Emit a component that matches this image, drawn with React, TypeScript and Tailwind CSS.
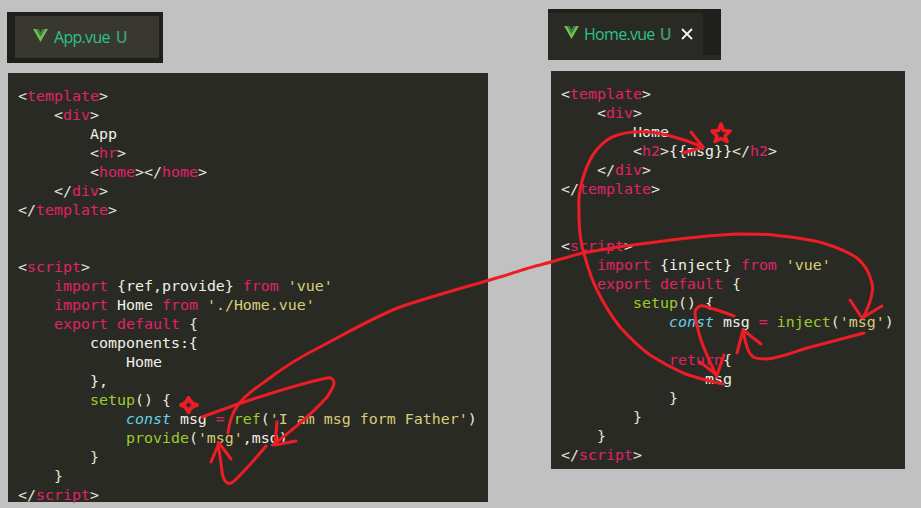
const pink = 'text-[#e0226a]';
const plain = 'text-[#f0f0e8]';
const green = 'text-[#9ccc2c]';
const str = 'text-[#d8ce78]';
const cyan = 'text-[#62d2ea] italic';
const punct = 'text-[#e6e6d8]';

type Tok = [string, string];

const tag = (name: string, close = false): Tok[] => [
  [close ? '</' : '<', punct],
  [name, pink],
  ['>', punct],
];

const leftLines: Tok[][] = [
  tag('template'),
  [['    ', plain], ...tag('div')],
  [['        App', plain]],
  [['        ', plain], ...tag('hr')],
  [['        ', plain], ...tag('home'), ...tag('home', true)],
  [['    ', plain], ...tag('div', true)],
  tag('template', true),
  [],
  [],
  tag('script'),
  [['    ', plain], ['import', pink], [' {ref,provide} ', plain], ['from', pink], [" 'vue'", str]],
  [['    ', plain], ['import', pink], [' Home ', plain], ['from', pink], [" './Home.vue'", str]],
  [['    ', plain], ['export default', pink], [' {', punct]],
  [['        components:{', plain]],
  [['            Home', plain]],
  [['        },', plain]],
  [['        ', plain], ['setup', green], ['() {', punct]],
  [['            ', plain], ['const', cyan], [' msg ', plain], ['=', pink], [' ', plain], ['ref', green], ['(', punct], ["'I am msg form Father'", str], [')', punct]],
  [['            ', plain], ['provide', green], ['(', punct], ["'msg'", str], [',msg)', plain]],
  [['        }', punct]],
  [['    }', punct]],
  tag('script', true),
];

const rightLines: Tok[][] = [
  tag('template'),
  [['    ', plain], ...tag('div')],
  [['        Home', plain]],
  [['        ', plain], ...tag('h2'), ['{{msg}}', plain], ...tag('h2', true)],
  [['    ', plain], ...tag('div', true)],
  tag('template', true),
  [],
  [],
  tag('script'),
  [['    ', plain], ['import', pink], [' {inject} ', plain], ['from', pink], [" 'vue'", str]],
  [['    ', plain], ['export default', pink], [' {', punct]],
  [['        ', plain], ['setup', green], ['() {', punct]],
  [['            ', plain], ['const', cyan], [' msg ', plain], ['=', pink], [' ', plain], ['inject', green], ['(', punct], ["'msg'", str], [')', punct]],
  [],
  [['            ', plain], ['return', pink], ['{', punct]],
  [['                msg', plain]],
  [['            }', punct]],
  [['        }', punct]],
  [['    }', punct]],
  tag('script', true),
];

function Code({ lines }: { lines: Tok[][] }) {
  return (
    <pre className="font-['DejaVu_Sans_Mono',monospace] text-[14.95px] leading-[19px]">
      {lines.map((line, i) => (
        <div key={i} className="h-[19px]">
          {line.map(([text, color], j) => (
            <span key={j} className={color}>
              {text}
            </span>
          ))}
        </div>
      ))}
    </pre>
  );
}

function VueIcon() {
  return (
    <svg width="15" height="13" viewBox="0 0 16 14" className="shrink-0 -translate-y-[2px]">
      <path d="M0 0h3.4L8 8l4.6-8H16L8 14z" fill="#6cc04a" />
      <path d="M3.4 0h2.6L8 3.5 10 0h2.6L8 8z" fill="#3f7d4a" />
    </svg>
  );
}

function Ink() {
  return (
    <svg
      width="921"
      height="508"
      viewBox="0 0 921 508"
      fill="none"
      stroke="#ee1c25"
      strokeWidth="3"
      strokeLinecap="round"
      strokeLinejoin="round"
      className="absolute left-0 top-0"
    >
      {/* long arrow from the left panel to inject('msg') */}
      <path d="M228 433C229 424 232 413 238 405C246 394 256 388 267 380C284 367 302 356 320 347C345 334 372 318 400 307C432 296 466 287 500 277C514 273 527 268 540 265C555 261 570 256 583 253C600 250 616 247 633 245C670 240 705 235 740 234C752 234 763 234 773 235C792 237 808 239 823 243C836 247 847 251 857 258C864 264 868 270 870 277C873 284 873 289 872 293C871 302 867 310 863 318" />
      <path d="M850 300L862 318L882 306" />
      {/* loop round const msg on the left */}
      <path d="M202 417L238 404C268 394 298 384 327 378C331 377 334 379 334 383C334 387 330 392 327 397C311 415 292 430 273 445" />
      <path d="M277 422L275 445L296 441" />
      <path d="M266 446C256 458 245 471 233 482C230 484 228 484 226 482C222 478 222 472 221 463C220 456 219 450 218 443" />
      <path d="M211 462L219 443L231 459" />
      {/* cross marker */}
      <path d="M181 405C185 404 187 402 188.5 398C190 402 192 404 197 405C192 406 190 408 188.5 412C187 408 185 406 181 405Z" strokeWidth="4" />
      {/* big curve in the right panel */}
      <path d="M703 147C691 142 679 138 667 135C655 132 644 131 633 132C623 133 614 135 607 140C599 146 594 152 590 160C585 170 582 180 580 190C578 200 579 208 579 217C579 232 581 245 585 257C588 268 592 280 597 290C604 304 611 316 620 327C629 337 639 347 650 355C661 362 672 368 683 373C696 378 709 381 723 384" />
      <path d="M691 132L703 147L683 153" />
      {/* star */}
      <path d="M721 124L723.5 130.5L730 131L725 136L727 141.5L721 138.5L715 141.5L717 136L712 131L718.5 130.5Z" strokeWidth="3.6" />
      {/* inner loop in the right panel */}
      <path d="M734 316C726 313 718 310 710 308C705 306 702 305 700 306C696 308 695 310 695 313C695 321 698 329 700 337C704 350 711 364 717 377" />
      <path d="M700 362L717 375L724 355" />
      <path d="M864 333C845 338 826 343 807 348C794 352 780 358 767 359C761 359 757 359 753 357C750 354 748 351 747 347C745 341 744 336 743 330" />
      <path d="M737 353L743 330L761 344" />
    </svg>
  );
}

export default function App() {
  return (
    <div className="relative flex h-[508px] w-[921px] overflow-hidden bg-[#c1c1c1]">
      <div className="ml-[7px] mt-[12px] w-[481px]">
        <div className="w-[156px] h-[51px] bg-[#1f1f1c] pl-[8px] pt-[4px] pr-[4px] pb-[5px]">
          <div className="flex h-[42px] items-center bg-[#383830] pl-[18px] font-['Open_Sans',sans-serif] text-[16px] tracking-[-0.7px]">
            <VueIcon />
            <span className="ml-[6px] text-[#2cc28a]">App.vue</span>
            <span className="ml-[6px] font-semibold text-[#3f9a70]">U</span>
          </div>
        </div>
        <div className="ml-px mt-[10px] h-[429px] w-[480px] bg-[#2a2a24] pl-[10px] pt-[14px]">
          <Code lines={leftLines} />
        </div>
      </div>

      <div className="ml-[60px] mt-[9px] w-[357px]">
        <div className="h-[51px] w-[173px] bg-[#2a2a24]">
          <div className="h-[4px] bg-[#1f1f1c]" />
          <div className="flex h-[42px]">
            <div className="flex w-[155px] items-center pl-[16px] font-['Open_Sans',sans-serif] text-[16px] tracking-[-0.7px]">
              <VueIcon />
              <span className="ml-[5px] text-[#2cc28a]">Home.vue</span>
              <span className="ml-[5px] font-semibold text-[#3f9a70]">U</span>
              <svg width="12" height="12" viewBox="0 0 12 12" className="ml-[10px]" stroke="#f4f4f4" strokeWidth="1.8">
                <path d="M1 1L11 11M11 1L1 11" />
              </svg>
            </div>
            <div className="flex-1 bg-[#1f1f1c]" />
          </div>
        </div>
        <div className="ml-[3px] mt-[11px] h-[398px] w-[354px] bg-[#2a2a24] pl-[10px] pt-[14px]">
          <Code lines={rightLines} />
        </div>
      </div>

      <Ink />
    </div>
  );
}
